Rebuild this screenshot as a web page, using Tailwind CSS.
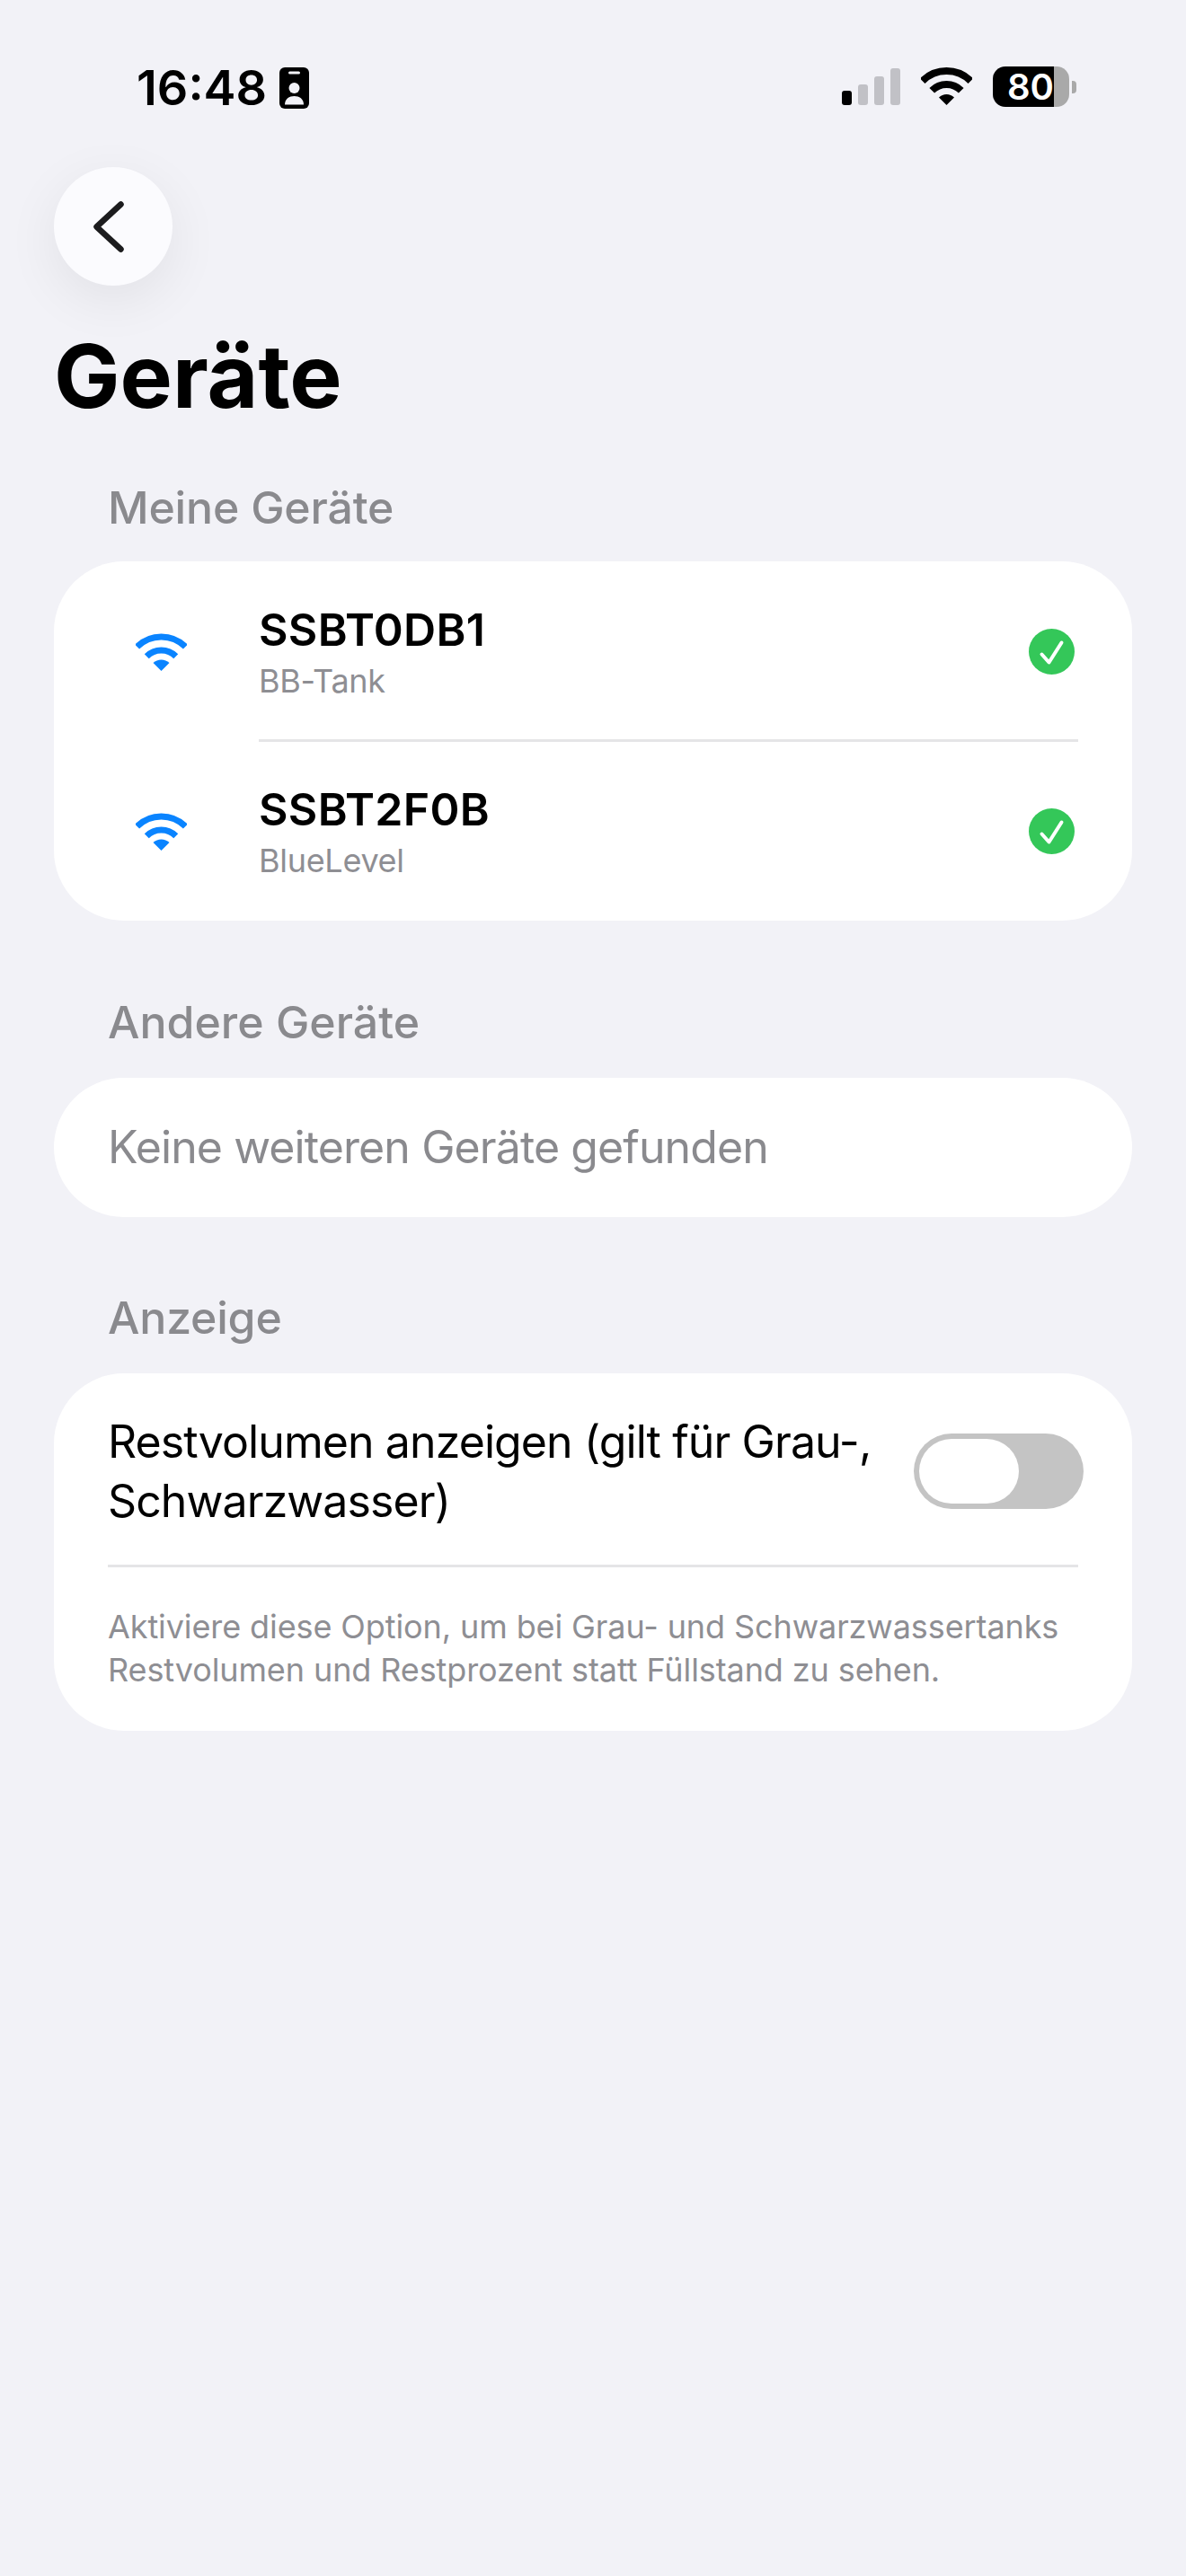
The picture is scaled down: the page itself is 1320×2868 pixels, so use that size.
<!DOCTYPE html>
<html lang="de">
<head>
  <meta charset="UTF-8" />
  <title>Geräte</title>
  <script src="https://cdn.jsdelivr.net/npm/@tailwindcss/browser@4"></script>
</head>
<body class="bg-[#f2f2f7] font-['Inter',sans-serif] text-black">
  <div class="h-[2868px] overflow-hidden">
    <!-- status bar -->
    <div class="relative h-[186px]">
      <div class="flex items-center pt-[72px] pl-[152px]">
        <span class="w-[143px] text-[54px] leading-[51px] font-semibold">16:48</span>
        <svg class="ml-[16px]" width="33" height="46" viewBox="0 0 33 46">
          <rect width="33" height="46" rx="6" fill="#000" />
          <rect x="10" y="4.5" width="13" height="3" rx="1.5" fill="#f2f2f7" />
          <circle cx="16.5" cy="23" r="6" fill="#f2f2f7" />
          <path d="M6 41.5C6 35 11 32 16.5 32C22 32 27 35 27 41.5Z" fill="#f2f2f7" />
        </svg>
      </div>
      <div class="absolute left-[937px] top-[74px] flex items-end gap-[7px] h-[43px]">
        <div class="w-[11px] h-[16px] rounded-[3px] bg-black"></div>
        <div class="w-[11px] h-[23px] rounded-[3px] bg-[#c1c1c6]"></div>
        <div class="w-[11px] h-[32px] rounded-[3px] bg-[#c1c1c6]"></div>
        <div class="w-[11px] h-[41px] rounded-[3px] bg-[#c1c1c6]"></div>
      </div>
      <svg class="absolute left-[1025px] top-[75px]" width="57" height="42" viewBox="0 0 57 42" fill="none">
        <path d="M1.63 15.13A38 38 0 0 1 55.37 15.13" stroke="#000" stroke-width="8" />
        <path d="M12.24 25.74A23 23 0 0 1 44.76 25.74" stroke="#000" stroke-width="8" />
        <path d="M28.5 42L20 33.5A12 12 0 0 1 37 33.5Z" fill="#000" />
      </svg>
      <div class="absolute left-[1105px] top-[74px] flex items-center">
        <div class="w-[68px] h-[45px] rounded-l-[14px] bg-black text-white text-[40px] leading-[45px] font-semibold text-right">80</div>
        <div class="w-[17px] h-[45px] rounded-r-[14px] bg-[#a9a9a9]"></div>
        <div class="ml-[3px] w-[5px] h-[14px] rounded-r-[4px] bg-[#a9a9a9]"></div>
      </div>
    </div>

    <main class="px-[60px]">
      <button class="flex items-center justify-center w-[132px] h-[132px] rounded-full bg-[#fbfbfe] shadow-[0_16px_60px_rgba(0,0,0,0.07)]">
        <svg width="34" height="57" viewBox="0 0 34 57" fill="none" class="-ml-[10px]">
          <path d="M30.5 3.5L3.5 28.5L30.5 53.5" stroke="#1c1c1e" stroke-width="6.5" stroke-linecap="round" stroke-linejoin="round" />
        </svg>
      </button>

      <h1 class="mt-[46px] text-[98px] leading-[110px] font-bold">Geräte</h1>

      <h2 class="mt-[61px] mb-[30px] pl-[60px] text-[50px] leading-[60px] font-medium tracking-[-0.2px] text-[#8a8a8e]">Meine Geräte</h2>
      <section class="rounded-[78px] bg-white">
        <div class="flex items-center pt-[46px] pb-[43px] pl-[91px] pr-[64px]">
          <svg width="57" height="42" viewBox="0 0 57 42" fill="none">
            <path d="M1.63 15.13A38 38 0 0 1 55.37 15.13" stroke="#0a84ff" stroke-width="7" />
            <path d="M12.24 25.74A23 23 0 0 1 44.76 25.74" stroke="#0a84ff" stroke-width="7" />
            <path d="M28.5 42L19.5 33A13 13 0 0 1 37.5 33Z" fill="#0a84ff" />
          </svg>
          <div class="ml-[80px] flex-1">
            <div class="text-[50px] leading-[60px] font-semibold tracking-[0.3px]">SSBT0DB1</div>
            <div class="mt-[5px] text-[36px] leading-[44px] tracking-[-0.3px] text-[#8e8e93]">BB-Tank</div>
          </div>
          <svg width="51" height="51" viewBox="0 0 51 51" fill="none">
            <circle cx="25.5" cy="25.5" r="25.5" fill="#34c759" />
            <path d="M14.5 28.5L22.5 37.5L36.5 15.5" stroke="#fff" stroke-width="4" stroke-linecap="round" stroke-linejoin="round" />
          </svg>
        </div>
        <div class="ml-[228px] mr-[60px] h-[3px] bg-[#e5e5e7]"></div>
        <div class="flex items-center pt-[45px] pb-[45px] pl-[91px] pr-[64px]">
          <svg width="57" height="42" viewBox="0 0 57 42" fill="none">
            <path d="M1.63 15.13A38 38 0 0 1 55.37 15.13" stroke="#0a84ff" stroke-width="7" />
            <path d="M12.24 25.74A23 23 0 0 1 44.76 25.74" stroke="#0a84ff" stroke-width="7" />
            <path d="M28.5 42L19.5 33A13 13 0 0 1 37.5 33Z" fill="#0a84ff" />
          </svg>
          <div class="ml-[80px] flex-1">
            <div class="text-[50px] leading-[60px] font-semibold tracking-[0.3px]">SSBT2F0B</div>
            <div class="mt-[5px] text-[36px] leading-[44px] tracking-[-0.3px] text-[#8e8e93]">BlueLevel</div>
          </div>
          <svg width="51" height="51" viewBox="0 0 51 51" fill="none">
            <circle cx="25.5" cy="25.5" r="25.5" fill="#34c759" />
            <path d="M14.5 28.5L22.5 37.5L36.5 15.5" stroke="#fff" stroke-width="4" stroke-linecap="round" stroke-linejoin="round" />
          </svg>
        </div>
      </section>

      <h2 class="mt-[83px] mb-[32px] pl-[60px] text-[50px] leading-[60px] font-medium text-[#8a8a8e]">Andere Geräte</h2>
      <section class="flex items-center h-[155px] pl-[60px] rounded-[78px] bg-white text-[50px] tracking-[-0.9px] text-[#8a8a8e]">
        Keine weiteren Geräte gefunden
      </section>

      <h2 class="mt-[82px] mb-[32px] pl-[60px] text-[50px] leading-[60px] font-medium tracking-[-0.2px] text-[#8a8a8e]">Anzeige</h2>
      <section class="rounded-[78px] bg-white px-[60px] pt-[43px] pb-[44px]">
        <div class="flex items-center justify-between">
          <div class="w-[880px] text-[50px] leading-[66px] tracking-[-0.9px]">Restvolumen anzeigen (gilt für Grau-, Schwarzwasser)</div>
          <div class="-mr-[6px] w-[189px] h-[84px] rounded-full bg-[#c4c4c4] p-[6px]">
            <div class="w-[111px] h-[72px] rounded-full bg-white"></div>
          </div>
        </div>
        <div class="mt-[38px] h-[3px] bg-[#e5e5e7]"></div>
        <p class="mt-[42px] text-[36px] leading-[48px] tracking-[-0.1px] text-[#8e8e93]">Aktiviere diese Option, um bei Grau- und Schwarzwassertanks Restvolumen und Restprozent statt Füllstand zu sehen.</p>
      </section>
    </main>
  </div>
</body>
</html>
